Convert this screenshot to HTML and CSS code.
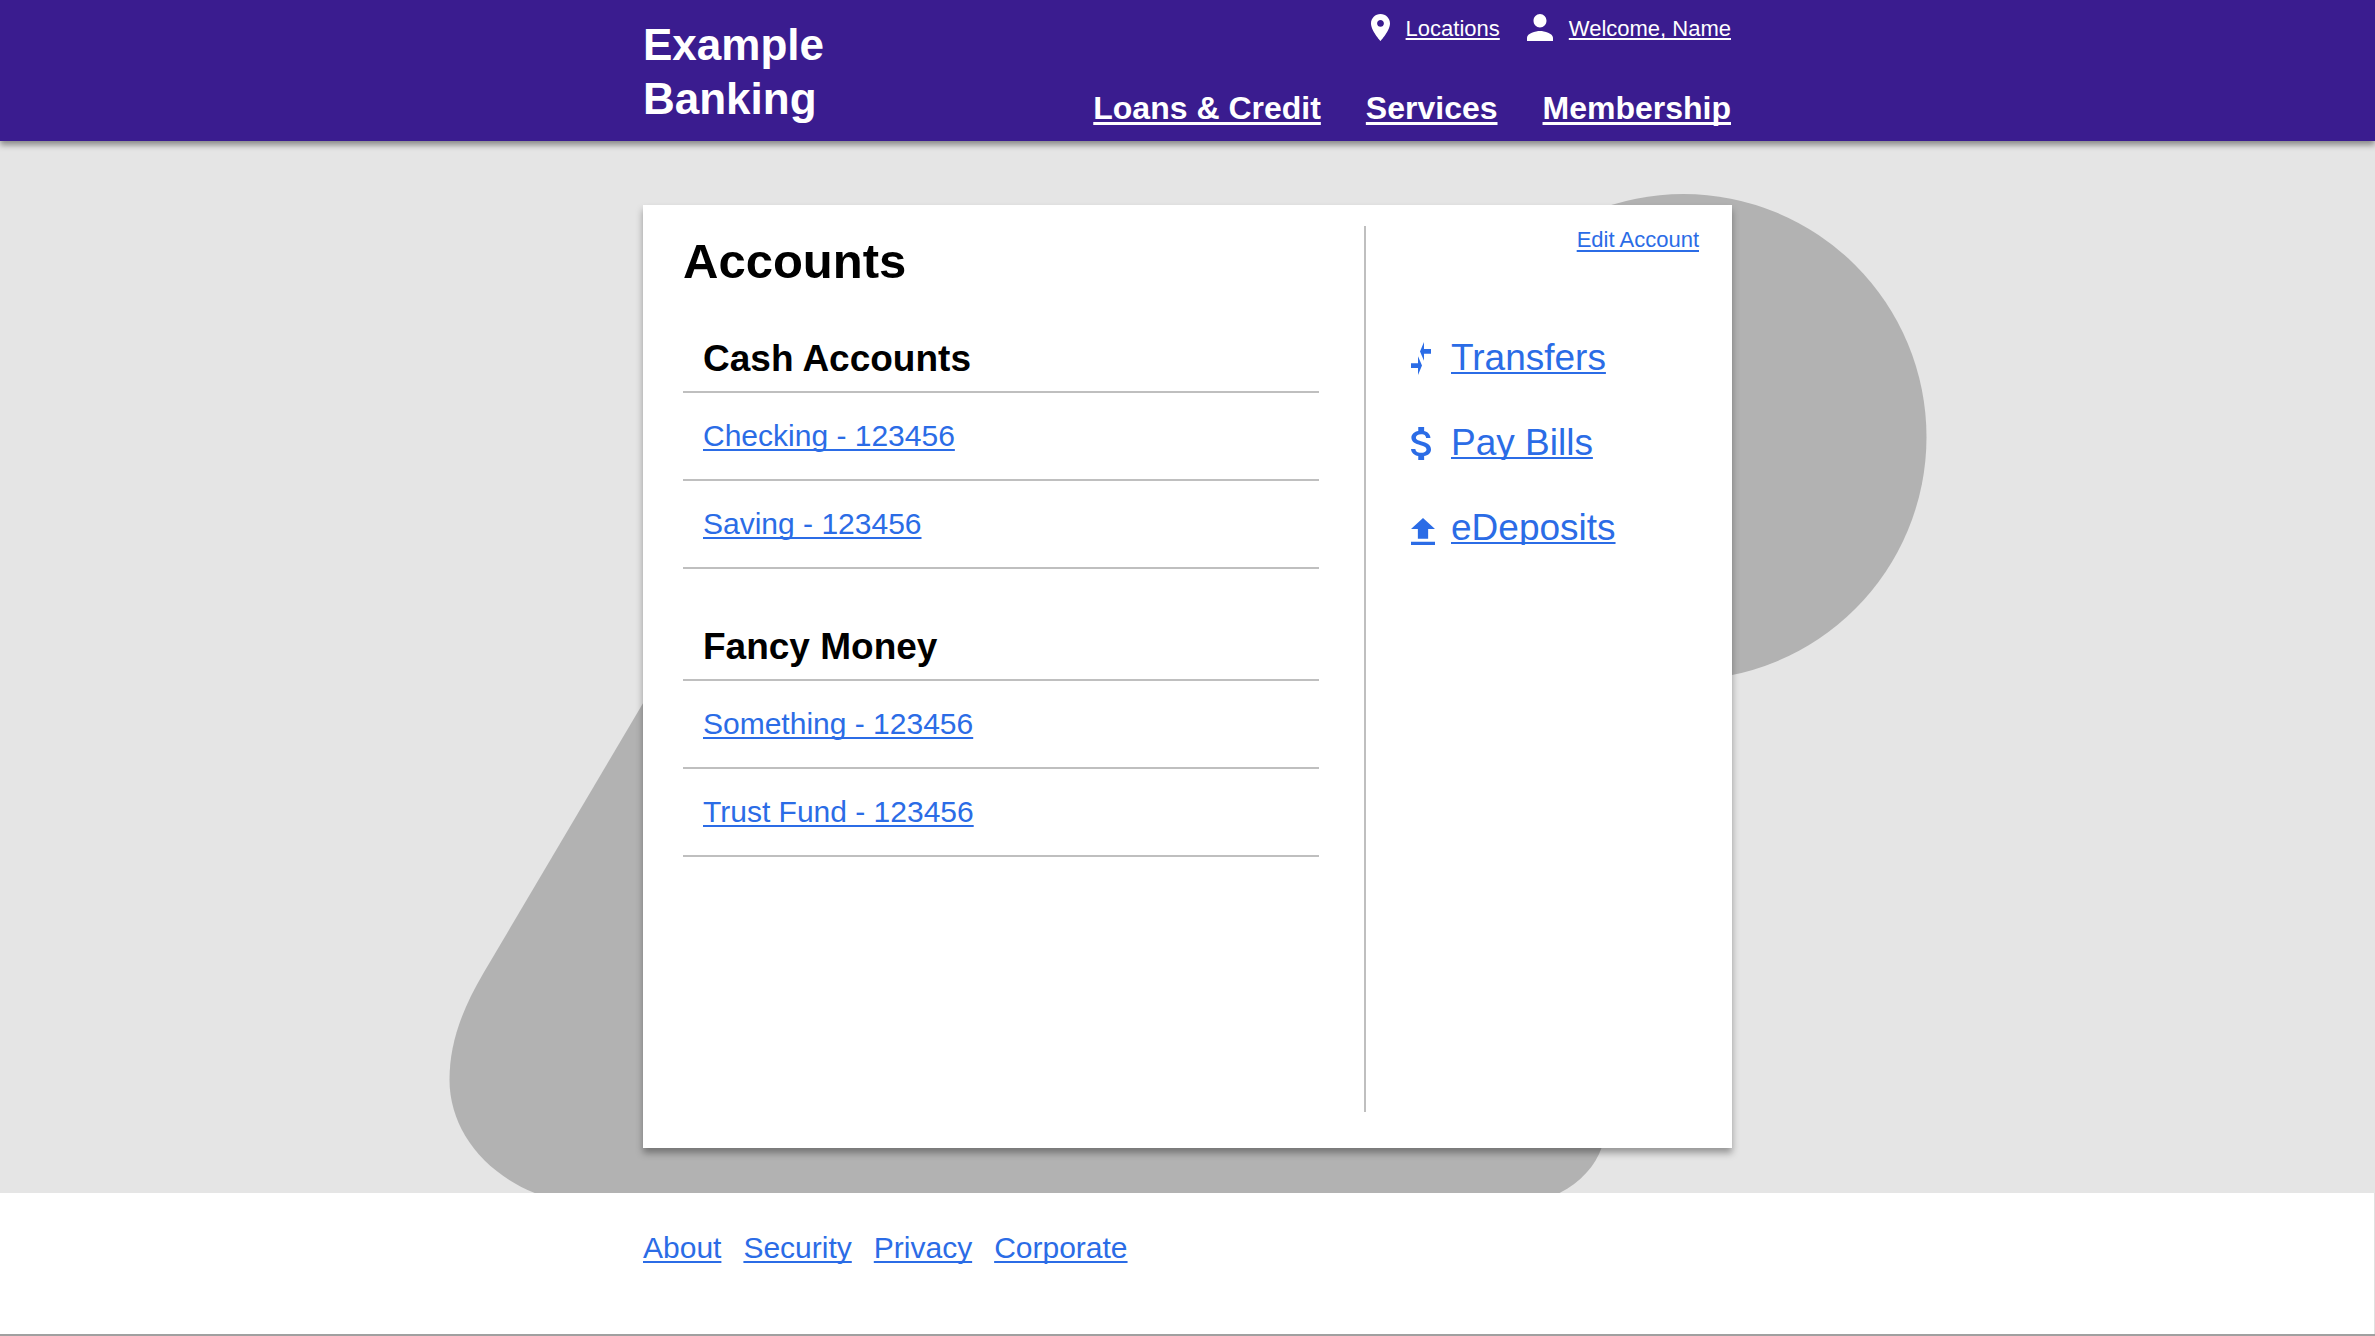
FILE: index.html
```html
<!DOCTYPE html>
<html lang="en">
<head>
<meta charset="utf-8">
<meta name="viewport" content="width=device-width, initial-scale=1">
<title>Accounts - Example Banking</title>
<link rel="stylesheet" href="styles.css">
</head>
<body>
<header class="site-header">
  <div class="container header-inner">
    <div class="brand">Example<br>Banking</div>
    <div class="header-links">
      <div class="utility">
        <a class="utility-link" href="#">
          <svg class="icon-pin" viewBox="5 2 14 20" preserveAspectRatio="none" aria-hidden="true"><path d="M12 2C8.13 2 5 5.13 5 9c0 5.25 7 13 7 13s7-7.75 7-13c0-3.87-3.13-7-7-7zm0 9.5c-1.38 0-2.5-1.12-2.5-2.5s1.12-2.5 2.5-2.5 2.5 1.12 2.5 2.5-1.12 2.5-2.5 2.5z"/></svg>
          <span>Locations</span>
        </a>
        <a class="utility-link" href="#">
          <svg class="icon-person" viewBox="4 4 16 16" preserveAspectRatio="none" aria-hidden="true"><path d="M12 12c2.21 0 4-1.79 4-4s-1.79-4-4-4-4 1.79-4 4 1.79 4 4 4zm0 2c-2.67 0-8 1.34-8 4v2h16v-2c0-2.66-5.33-4-8-4z"/></svg>
          <span>Welcome, Name</span>
        </a>
      </div>
      <nav class="main-nav">
        <a href="#">Loans &amp; Credit</a>
        <a href="#">Services</a>
        <a href="#">Membership</a>
      </nav>
    </div>
  </div>
</header>

<main class="page">
  <svg class="backdrop" viewBox="437 141 1501 1052" aria-hidden="true">
    <circle cx="1683" cy="437" r="243"/>
    <path d="M700 606L483 973C460 1012 449 1045 449 1080C449 1130 485 1177 545 1197L1550 1197C1576 1187 1594 1168 1601 1148L1601 1000Z"/>
  </svg>
  <div class="container card">
    <section class="accounts">
      <h1>Accounts</h1>
      <section class="account-group">
        <h2>Cash Accounts</h2>
        <ul>
          <li><a href="#">Checking - 123456</a></li>
          <li><a href="#">Saving - 123456</a></li>
        </ul>
      </section>
      <section class="account-group">
        <h2>Fancy Money</h2>
        <ul>
          <li><a href="#">Something - 123456</a></li>
          <li><a href="#">Trust Fund - 123456</a></li>
        </ul>
      </section>
    </section>
    <aside class="sidebar">
      <a class="edit-link" href="#">Edit Account</a>
      <ul class="actions">
        <li>
          <svg class="icon-tall" viewBox="2 5 20 14" preserveAspectRatio="none" aria-hidden="true"><path d="M9.01 14H2v2h7.01v3L13 15l-3.99-4v3zm5.98-1v-3H22V8h-7.01V5L11 9l3.99 4z"/></svg>
          <a href="#">Transfers</a>
        </li>
        <li>
          <svg class="icon-tall" viewBox="6.3 3 10.2 18" preserveAspectRatio="none" aria-hidden="true"><path d="M11.8 10.9c-2.27-.59-3-1.2-3-2.15 0-1.09 1.01-1.85 2.7-1.85 1.78 0 2.44.85 2.5 2.1h2.21c-.07-1.72-1.12-3.3-3.21-3.81V3h-3v2.16c-1.94.42-3.5 1.68-3.5 3.61 0 2.31 1.91 3.46 4.7 4.13 2.5.6 3 1.48 3 2.41 0 .69-.49 1.79-2.7 1.79-2.06 0-2.87-.92-2.98-2.1h-2.2c.12 2.19 1.76 3.42 3.68 3.83V21h3v-2.15c1.95-.37 3.5-1.5 3.5-3.55 0-2.84-2.43-3.81-4.7-4.4z"/></svg>
          <a href="#">Pay Bills</a>
        </li>
        <li>
          <svg class="icon-upload" viewBox="5 3 14 17" preserveAspectRatio="none" aria-hidden="true"><path d="M9 16h6v-6h4l-7-7-7 7h4zm-4 2h14v2H5z"/></svg>
          <a href="#">eDeposits</a>
        </li>
      </ul>
    </aside>
  </div>
</main>

<footer class="site-footer">
  <nav class="container footer-nav">
    <a href="#">About</a>
    <a href="#">Security</a>
    <a href="#">Privacy</a>
    <a href="#">Corporate</a>
  </nav>
</footer>
</body>
</html>
```
FILE: styles.css
```css
* {
  box-sizing: border-box;
}

body {
  margin: 0;
  min-height: 100vh;
  display: flex;
  flex-direction: column;
  background: #fff;
  color: #000;
  font-family: "Liberation Sans", Arial, sans-serif;
}

h1, h2, ul {
  margin: 0;
  padding: 0;
}

ul {
  list-style: none;
}

a {
  color: #2b6ce6;
  text-decoration-skip-ink: none;
  text-decoration-thickness: 2px;
  text-underline-offset: 3px;
}

.container {
  width: 100%;
  max-width: 1089px;
  margin: 0 auto;
}

/* Header */

.site-header {
  position: relative;
  z-index: 1;
  background: #3a1c8f;
  color: #fff;
  box-shadow: 0 4px 6px rgba(0, 0, 0, 0.4);
}

.site-header a {
  color: #fff;
  fill: #fff;
}

.header-inner {
  display: flex;
  justify-content: space-between;
  padding: 14px 1px 13px 0;
}

.brand {
  padding: 4px 0 2px;
  font-size: 44px;
  font-weight: 700;
  line-height: 54px;
}

.header-links {
  display: flex;
  flex-direction: column;
  justify-content: space-between;
  align-items: flex-end;
}

.utility {
  display: flex;
  gap: 27px;
}

.utility-link {
  display: flex;
  gap: 16px;
  font-size: 22px;
  line-height: 30px;
  text-decoration: none;
}

.utility-link span {
  text-decoration: underline 2px;
  text-decoration-skip-ink: none;
  text-underline-offset: 2px;
}

.icon-pin {
  width: 19px;
  height: 27px;
}

.icon-person {
  width: 26px;
  height: 27px;
}

.main-nav {
  display: flex;
  gap: 45px;
  font-size: 32px;
  font-weight: 700;
  line-height: 40px;
}

.main-nav a {
  text-decoration-thickness: 3px;
}

/* Page */

.page {
  position: relative;
  flex: 1;
  padding: 64px 0 45px;
  display: flex;
  overflow: hidden;
  background: #e5e5e5;
}

.backdrop {
  position: absolute;
  top: 0;
  left: 50%;
  width: 1501px;
  transform: translateX(-50%);
  fill: #b2b2b2;
}

.card {
  position: relative;
  display: flex;
  min-height: 943px;
  padding: 21px 33px 36px 40px;
  background: #fff;
  box-shadow: 0 5px 7px rgba(0, 0, 0, 0.35);
}

.accounts {
  flex: 1;
  padding-right: 45px;
}

h1 {
  padding-top: 6px;
  font-size: 49px;
  line-height: 58px;
}

.account-group {
  padding-top: 48px;
}

h2 {
  padding: 0 20px 11px;
  border-bottom: 2px solid #bfbfbf;
  font-size: 37px;
  line-height: 42px;
}

.account-group + .account-group {
  padding-top: 57px;
}

.account-group li {
  padding: 26px 20px;
  border-bottom: 2px solid #bfbfbf;
  font-size: 30px;
  line-height: 34px;
}

/* Sidebar */

.sidebar {
  flex: 0 0 335px;
  display: flex;
  flex-direction: column;
  border-left: 2px solid #bfbfbf;
}

.edit-link {
  align-self: flex-end;
  font-size: 22px;
  line-height: 28px;
}

.actions {
  display: flex;
  flex-direction: column;
  gap: 51px;
  padding: 87px 0 0 45px;
}

.actions li {
  display: grid;
  grid-template-columns: 24px auto;
  column-gap: 16px;
  align-items: end;
  justify-content: start;
  fill: #2b6ce6;
}

.actions a {
  overflow: hidden;
  font-size: 37px;
  line-height: 34px;
  text-underline-offset: 2px;
}

.icon-tall {
  width: 20px;
  height: 33px;
}

.icon-upload {
  width: 24px;
  height: 27px;
}

/* Footer */

.site-footer {
  padding: 38px 0 69px;
  border-bottom: 2px solid #a0a0a0;
  box-shadow: inset -1px 0 #e0e0e0;
}

.footer-nav {
  display: flex;
  gap: 22px;
  font-size: 30px;
  line-height: 34px;
}
```
